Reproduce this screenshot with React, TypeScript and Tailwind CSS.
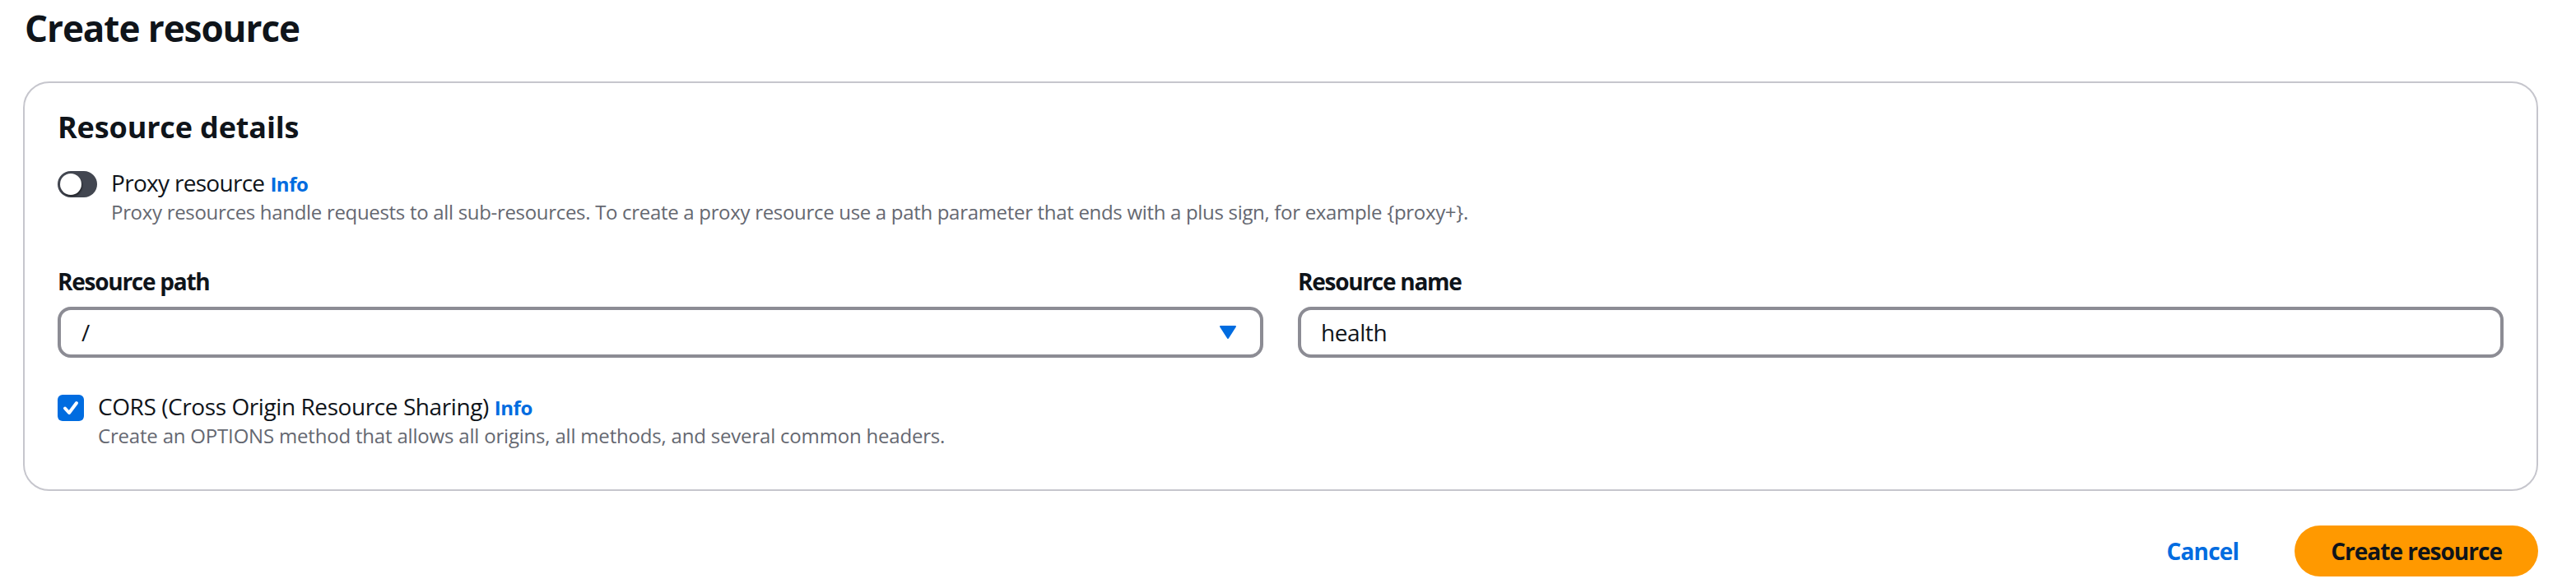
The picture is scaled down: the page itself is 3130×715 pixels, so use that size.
import React from "react"

const InfoLink = () => (
  <a className="ml-[7px] text-[24px] font-bold leading-[32px] tracking-[-0.02em] text-[#006ce0]">Info</a>
)

const Toggle = () => (
  <div className="mt-[6px] flex h-[32px] w-[48px] shrink-0 items-center rounded-full bg-[#424650] px-[3px]">
    <div className="h-[26px] w-[26px] rounded-full bg-white shadow-[1px_2px_2px_rgba(0,0,0,0.45)]" />
  </div>
)

const Checkbox = () => (
  <div className="mt-[6px] flex h-[32px] w-[32px] shrink-0 items-center justify-center rounded-[6px] bg-[#006ce0]">
    <svg width="32" height="32" viewBox="0 0 32 32" fill="none">
      <path d="M9 16.5 L14 22 L23 10" stroke="white" strokeWidth="4" strokeLinecap="round" strokeLinejoin="round" />
    </svg>
  </div>
)

export default function App() {
  return (
    <div className="min-h-screen bg-white pl-[28px] pr-[46px] pt-[4px] font-['Open_Sans','Noto_Sans',sans-serif] text-[#0f141a]">
      <h1 className="pl-[2px] text-[44px] font-bold leading-[60px] tracking-[-0.024em]">Create resource</h1>

      <div className="mt-[35px] rounded-[32px] border-2 border-[#c6c6cd] px-[40px] pt-[30px] pb-[49px]">
        <h2 className="text-[36px] font-bold leading-[48px] tracking-[-0.004em]">Resource details</h2>

        <div className="mt-[23px] flex">
          <Toggle />
          <div className="ml-[17px]">
            <div className="text-[28px] leading-[40px] tracking-[-0.025em]">
              Proxy resource
              <InfoLink />
            </div>
            <div className="text-[24px] leading-[32px] tracking-[-0.013em] text-[#656871]">
              Proxy resources handle requests to all sub-resources. To create a proxy resource use a path parameter
              that ends with a plus sign, for example {"{proxy+}"}.
            </div>
          </div>
        </div>

        <div className="mt-[48px] grid grid-cols-2 gap-[42px]">
          <div>
            <div className="text-[28px] font-bold leading-[40px] tracking-[-0.045em]">Resource path</div>
            <div className="mt-[11px] flex h-[62px] items-center justify-between rounded-[16px] border-[4px] border-[#8c8c94] pl-[25px] pr-[29px]">
              <span className="text-[28px] leading-[40px]">/</span>
              <svg width="20" height="16" viewBox="0 0 20 16">
                <path d="M1 1 L19 1 L10 15 Z" fill="#006ce0" stroke="#006ce0" strokeWidth="2" strokeLinejoin="round" />
              </svg>
            </div>
          </div>
          <div>
            <div className="text-[28px] font-bold leading-[40px] tracking-[-0.045em]">Resource name</div>
            <div className="mt-[11px] flex h-[62px] items-center rounded-[16px] border-[4px] border-[#8c8c94] pl-[24px]">
              <span className="text-[28px] leading-[40px] tracking-[-0.015em]">health</span>
            </div>
          </div>
        </div>

        <div className="mt-[39px] flex">
          <Checkbox />
          <div className="ml-[17px]">
            <div className="text-[28px] leading-[40px] tracking-[-0.015em]">
              CORS (Cross Origin Resource Sharing)
              <InfoLink />
            </div>
            <div className="text-[24px] leading-[32px] tracking-[-0.008em] text-[#656871]">
              Create an OPTIONS method that allows all origins, all methods, and several common headers.
            </div>
          </div>
        </div>
      </div>

      <div className="mt-[42px] flex items-center justify-end gap-[68px]">
        <button className="text-[28px] font-bold leading-[40px] tracking-[-0.03em] text-[#006ce0]">Cancel</button>
        <button className="flex h-[62px] items-center rounded-full bg-[#ff9900] px-[44px] text-[28px] font-bold leading-[40px] tracking-[-0.035em] text-[#0f141a]">
          Create resource
        </button>
      </div>
    </div>
  )
}
